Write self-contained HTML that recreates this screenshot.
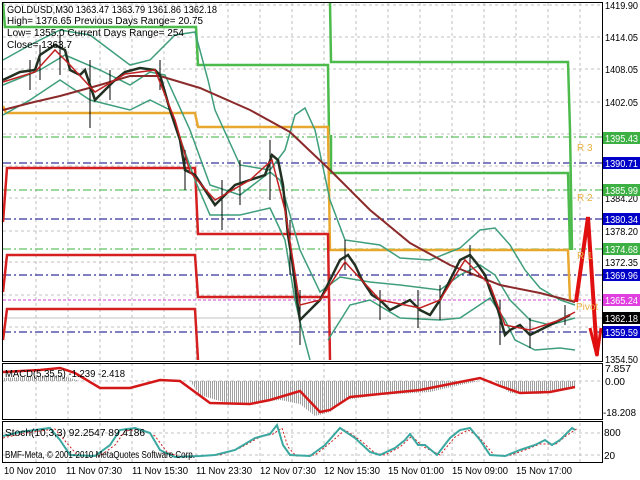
<!DOCTYPE html>
<html><head><meta charset="utf-8"><style>
html,body{margin:0;padding:0;background:#fff;}
svg{display:block;font-family:"Liberation Sans",sans-serif;}
</style></head><body>
<svg width="640" height="480" viewBox="0 0 640 480" xmlns="http://www.w3.org/2000/svg">
<defs>
<pattern id="hist" width="2" height="10" patternUnits="userSpaceOnUse"><rect x="0" y="0" width="1" height="10" fill="#a0a0a0"/></pattern>
</defs>
<rect width="640" height="480" fill="#fff"/>
<g stroke="#c0c0c0" stroke-dasharray="3,3" stroke-width="1">
<line x1="36" y1="3" x2="36" y2="462"/><line x1="68" y1="3" x2="68" y2="462"/><line x1="100" y1="3" x2="100" y2="462"/><line x1="132" y1="3" x2="132" y2="462"/><line x1="164" y1="3" x2="164" y2="462"/><line x1="196" y1="3" x2="196" y2="462"/><line x1="228" y1="3" x2="228" y2="462"/><line x1="260" y1="3" x2="260" y2="462"/><line x1="292" y1="3" x2="292" y2="462"/><line x1="324" y1="3" x2="324" y2="462"/><line x1="356" y1="3" x2="356" y2="462"/><line x1="388" y1="3" x2="388" y2="462"/><line x1="420" y1="3" x2="420" y2="462"/><line x1="452" y1="3" x2="452" y2="462"/><line x1="484" y1="3" x2="484" y2="462"/><line x1="516" y1="3" x2="516" y2="462"/><line x1="548" y1="3" x2="548" y2="462"/><line x1="580" y1="3" x2="580" y2="462"/>
<line x1="3" y1="5" x2="602" y2="5"/><line x1="3" y1="37" x2="602" y2="37"/><line x1="3" y1="69" x2="602" y2="69"/><line x1="3" y1="102" x2="602" y2="102"/><line x1="3" y1="134" x2="602" y2="134"/><line x1="3" y1="166" x2="602" y2="166"/><line x1="3" y1="198" x2="602" y2="198"/><line x1="3" y1="231" x2="602" y2="231"/><line x1="3" y1="262" x2="602" y2="262"/><line x1="3" y1="295" x2="602" y2="295"/><line x1="3" y1="327" x2="602" y2="327"/>
<line x1="3" y1="381" x2="602" y2="381"/><line x1="3" y1="433" x2="602" y2="433"/><line x1="3" y1="455" x2="602" y2="455"/>
</g>
<g stroke-width="1" stroke-dasharray="8,3,2,3">
<line x1="3" y1="137" x2="602" y2="137" stroke="#3cb043"/>
<line x1="3" y1="190" x2="602" y2="190" stroke="#3cb043"/>
<line x1="3" y1="249" x2="602" y2="249" stroke="#3cb043"/>
<line x1="3" y1="163" x2="602" y2="163" stroke="#000080"/>
<line x1="3" y1="219" x2="602" y2="219" stroke="#000080"/>
<line x1="3" y1="275" x2="602" y2="275" stroke="#000080"/>
<line x1="3" y1="332" x2="602" y2="332" stroke="#000080"/>
</g>
<line x1="3" y1="300" x2="602" y2="300" stroke="#d040d0" stroke-dasharray="3,2"/>
<line x1="3" y1="318" x2="602" y2="318" stroke="#c0c0c0"/>
<g fill="none" stroke-width="2.5">
<polyline stroke="#4cbb4c" points="3,3 5,27 196,27 198,65 328,65 329,135"/>
<polyline stroke="#4cbb4c" points="330,2 331,62 568,62 570,130 572,250"/>
<polyline stroke="#4cbb4c" points="331,135 331,173 568,173 570,250"/>
<polyline stroke="#e8a830" points="3,106 6,113 195,113 198,127 328,127 330,250 568,250 570,300 575,302"/>
<polyline stroke="#d42020" points="3,222 7,168 195,168 198,234 328,234 330,360"/>
<polyline stroke="#d42020" points="3,292 7,255 195,255 198,297 328,297"/>
<polyline stroke="#d42020" points="3,340 7,309 195,309 198,360"/>
</g>
<g fill="none" stroke="#3e9e7a" stroke-width="1.5">
<polyline points="3,60 30,45 60,30 90,35 110,50 130,65 150,60 175,35 195,32 208,80 215,110 240,165 270,170 285,150 295,115 305,108 315,130 330,200 345,240 380,245 400,258 430,260 460,248 480,230 495,228 510,245 525,270 540,288 560,300 575,305"/>
<polyline points="3,85 40,70 65,55 100,70 130,85 150,72 165,75 190,130 210,185 240,195 270,172 280,180 300,250 320,292 340,277 370,282 400,285 440,290 460,275 480,265 495,275 510,300 530,320 550,325 575,318"/>
<polyline points="3,115 30,100 60,80 90,100 130,110 150,100 170,110 195,180 210,215 240,215 270,208 285,240 295,300 302,330 310,360"/>
<polyline points="328,340 350,305 370,300 400,318 440,320 460,318 490,298 505,320 515,340 535,350 560,348 575,350"/>
</g>
<polyline fill="none" stroke="#8b2a2a" stroke-width="2" points="3,110 30,103 60,96 100,85 130,76 160,76 200,88 250,110 290,132 330,170 370,210 410,243 450,265 500,285 540,293 575,302"/>
<g stroke="#000" stroke-width="1">
<line x1="40" y1="45" x2="40" y2="80"/><line x1="60" y1="35" x2="60" y2="75"/><line x1="90" y1="60" x2="90" y2="128"/><line x1="160" y1="60" x2="160" y2="90"/><line x1="222" y1="180" x2="222" y2="230"/><line x1="270" y1="140" x2="270" y2="200"/><line x1="300" y1="290" x2="300" y2="345"/><line x1="345" y1="240" x2="345" y2="270"/><line x1="418" y1="290" x2="418" y2="328"/><line x1="470" y1="245" x2="470" y2="275"/><line x1="530" y1="318" x2="530" y2="348"/><line x1="565" y1="305" x2="565" y2="325"/>
<line x1="30" y1="60" x2="30" y2="90"/><line x1="110" y1="70" x2="110" y2="100"/><line x1="185" y1="150" x2="185" y2="190"/><line x1="240" y1="160" x2="240" y2="205"/><line x1="290" y1="220" x2="290" y2="275"/><line x1="380" y1="290" x2="380" y2="320"/><line x1="440" y1="285" x2="440" y2="320"/><line x1="500" y1="300" x2="500" y2="345"/>
</g>
<polyline fill="none" stroke="#223022" stroke-width="2.5" points="3,80 20,72 35,70 40,55 55,45 65,50 70,70 80,75 85,70 95,100 105,90 115,80 125,72 140,68 155,70 160,75 170,110 180,140 185,170 195,175 205,190 215,205 225,195 235,185 250,180 265,175 272,155 278,160 283,185 288,235 292,260 297,300 300,320 310,310 320,300 330,280 340,260 348,255 355,265 362,280 372,295 380,300 390,310 400,305 410,300 420,310 430,315 440,300 450,280 460,260 470,255 478,265 485,275 490,290 498,310 505,335 510,330 520,325 530,335 540,330 550,325 560,320 570,315"/>
<polyline fill="none" stroke="#c02020" stroke-width="1.5" points="3,82 35,72 55,50 70,65 95,92 125,74 155,70 175,120 190,172 215,200 250,180 272,160 285,210 300,305 320,300 345,262 380,300 420,308 440,300 465,260 490,285 505,325 530,330 560,320 575,312"/>
<polyline fill="none" stroke="#e01010" stroke-width="4" points="576,302 588,217 597,355"/>
<polyline fill="none" stroke="#e01010" stroke-width="3" points="590,328 597,356 601,328"/>
<g font-size="10" fill="#e8b040"><text x="577" y="151">R 3</text><text x="577" y="201">R 2</text><text x="577" y="259">R 1</text><text x="576" y="310">Pivot</text></g>
<polygon fill="url(#hist)" points="3,381 3,378 60,375 80,381 190,381 200,395 230,404 260,402 280,400 300,404 315,416 330,412 345,400 380,395 430,392 460,385 480,381 495,381 510,393 540,394 575,388 575,381"/>
<polyline fill="none" stroke="#d41818" stroke-width="2.5" points="3,372 40,370 60,368 75,373 100,388 130,388 160,380 180,381 210,403 250,404 270,400 290,394 300,391 320,412 330,410 350,397 380,394 420,390 460,382 480,378 500,386 520,393 550,392 575,387"/>
<polyline fill="none" stroke="#d02020" stroke-width="1" stroke-dasharray="2,2" points="3,438 25,433 55,429 66,442 78,456 100,456 115,445 125,431 140,429 155,436 167,452 180,457 220,455 240,448 260,437 273,434 282,428 288,447 296,456 315,455 330,443 345,430 360,440 375,453 385,455 400,447 412,436 422,446 440,455 455,437 468,430 478,436 494,455 508,456 525,450 540,444 556,444 566,436 578,428"/>
<polyline fill="none" stroke="#3aa8a0" stroke-width="2" points="3,436 20,432 50,428 60,440 70,455 95,456 110,445 120,430 135,428 150,433 160,450 175,457 200,456 215,455 235,450 255,438 270,434 277,425 283,445 290,455 310,456 325,445 340,428 355,438 370,452 380,455 395,448 405,440 410,434 418,445 425,445 437,455 450,438 460,430 470,428 480,440 490,455 505,456 520,450 535,445 545,440 552,445 560,440 572,428 575,430"/>
<g fill="none" stroke="#000" stroke-width="1">
<rect x="2.5" y="2.5" width="600" height="359"/>
<rect x="2.5" y="363.5" width="600" height="56"/>
<rect x="2.5" y="421.5" width="600" height="41"/>
</g>
<g font-size="10" fill="#000" lengthAdjust="spacingAndGlyphs">
<text x="7" y="13" textLength="210" lengthAdjust="spacingAndGlyphs">GOLDUSD,M30  1363.47 1363.79 1361.86 1362.18</text>
<text x="7" y="24" textLength="196" lengthAdjust="spacingAndGlyphs">High= 1376.65    Previous Days Range= 20.75</text>
<text x="7" y="36" textLength="177" lengthAdjust="spacingAndGlyphs">Low= 1355.0   Current Days Range= 254</text>
<text x="7" y="48" textLength="65" lengthAdjust="spacingAndGlyphs">Close= 1363.7</text>
<text x="5" y="377" textLength="120" lengthAdjust="spacingAndGlyphs">MACD(5,35,5) -1.239 -2.418</text>
<text x="5" y="436" textLength="140" lengthAdjust="spacingAndGlyphs">Stoch(10,3,3) 92.2547 89.4186</text>
<text x="5" y="458" textLength="190" lengthAdjust="spacingAndGlyphs">BMF-Meta, © 2001-2010 MetaQuotes Software Corp.</text>
</g>
<g font-size="10" fill="#000">
<text x="605" y="9" textLength="33" lengthAdjust="spacingAndGlyphs">1419.90</text><text x="605" y="41" textLength="33" lengthAdjust="spacingAndGlyphs">1414.05</text><text x="605" y="73" textLength="33" lengthAdjust="spacingAndGlyphs">1408.05</text><text x="605" y="106" textLength="33" lengthAdjust="spacingAndGlyphs">1402.05</text><text x="605" y="202" textLength="33" lengthAdjust="spacingAndGlyphs">1384.20</text><text x="605" y="235" textLength="33" lengthAdjust="spacingAndGlyphs">1378.20</text><text x="605" y="266" textLength="33" lengthAdjust="spacingAndGlyphs">1372.35</text><text x="605" y="363" textLength="33" lengthAdjust="spacingAndGlyphs">1354.50</text>
<text x="605" y="372" textLength="26" lengthAdjust="spacingAndGlyphs">7.857</text><text x="605" y="385" textLength="20" lengthAdjust="spacingAndGlyphs">0.00</text><text x="603" y="416" textLength="33" lengthAdjust="spacingAndGlyphs">-18.208</text>
<text x="604" y="436">800</text><text x="604" y="459">20</text>
</g>
<g font-size="10" fill="#fff">
<rect x="603" y="132" width="37" height="12" fill="#3cb043"/><text x="605" y="142" textLength="33" lengthAdjust="spacingAndGlyphs">1395.43</text>
<rect x="603" y="157" width="37" height="12" fill="#0000c8"/><text x="605" y="167" textLength="33" lengthAdjust="spacingAndGlyphs">1390.71</text>
<rect x="603" y="184" width="37" height="12" fill="#3cb043"/><text x="605" y="194" textLength="33" lengthAdjust="spacingAndGlyphs">1385.99</text>
<rect x="603" y="213" width="37" height="12" fill="#0000c8"/><text x="605" y="223" textLength="33" lengthAdjust="spacingAndGlyphs">1380.34</text>
<rect x="603" y="243" width="37" height="12" fill="#3cb043"/><text x="605" y="253" textLength="33" lengthAdjust="spacingAndGlyphs">1374.68</text>
<rect x="603" y="269" width="37" height="12" fill="#0000c8"/><text x="605" y="279" textLength="33" lengthAdjust="spacingAndGlyphs">1369.96</text>
<rect x="603" y="294" width="37" height="12" fill="#e040e0"/><text x="605" y="304" textLength="33" lengthAdjust="spacingAndGlyphs">1365.24</text>
<rect x="603" y="312" width="37" height="12" fill="#000"/><text x="605" y="322" textLength="33" lengthAdjust="spacingAndGlyphs">1362.18</text>
<rect x="603" y="326" width="37" height="12" fill="#0000c8"/><text x="605" y="336" textLength="33" lengthAdjust="spacingAndGlyphs">1359.59</text>
</g>
<g font-size="10" fill="#000">
<text x="4" y="474" textLength="52" lengthAdjust="spacingAndGlyphs">10 Nov 2010</text><text x="66" y="474" textLength="56" lengthAdjust="spacingAndGlyphs">11 Nov 07:30</text><text x="132" y="474" textLength="56" lengthAdjust="spacingAndGlyphs">11 Nov 15:30</text><text x="196" y="474" textLength="56" lengthAdjust="spacingAndGlyphs">11 Nov 23:30</text><text x="260" y="474" textLength="56" lengthAdjust="spacingAndGlyphs">12 Nov 07:30</text><text x="324" y="474" textLength="56" lengthAdjust="spacingAndGlyphs">12 Nov 15:30</text><text x="388" y="474" textLength="56" lengthAdjust="spacingAndGlyphs">15 Nov 01:00</text><text x="452" y="474" textLength="56" lengthAdjust="spacingAndGlyphs">15 Nov 09:00</text><text x="516" y="474" textLength="56" lengthAdjust="spacingAndGlyphs">15 Nov 17:00</text>
</g>
</svg>
</body></html>
